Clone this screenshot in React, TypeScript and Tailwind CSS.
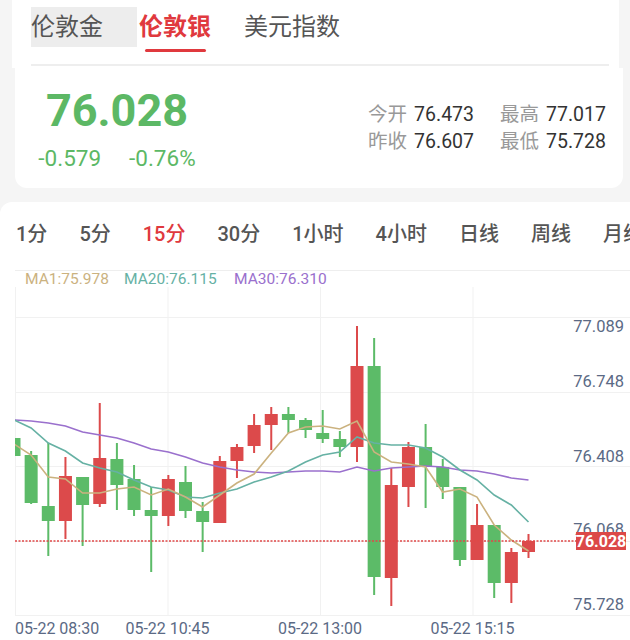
const RED = '#dc4a4b';
const GREEN = '#5cbb68';

// [color, bodyTop, bodyBottom, wickTop, wickBottom]
const candles: [string, number, number, number, number][] = [
  ['g', 438, 456, 436, 458],
  ['g', 455, 503, 451, 504],
  ['g', 506, 521, 443, 556],
  ['r', 476, 521, 457, 539],
  ['g', 477, 505, 477, 546],
  ['r', 458, 504, 403, 507],
  ['g', 459, 485, 443, 510],
  ['g', 479, 510, 465, 516],
  ['g', 510, 516, 487, 572],
  ['r', 479, 516, 475, 526],
  ['g', 482, 511, 466, 518],
  ['g', 511, 522, 502, 552],
  ['r', 461, 523, 456, 523],
  ['r', 447, 461, 444, 478],
  ['r', 425, 446, 414, 453],
  ['r', 414, 425, 407, 450],
  ['g', 414, 420, 407, 433],
  ['g', 420, 430, 418, 438],
  ['g', 433, 439, 410, 443],
  ['g', 439, 447, 431, 457],
  ['r', 366, 447, 326, 462],
  ['g', 366, 577, 338, 595],
  ['r', 485, 578, 468, 606],
  ['r', 447, 487, 442, 507],
  ['g', 447, 467, 424, 508],
  ['g', 467, 487, 459, 499],
  ['g', 487, 560, 487, 566],
  ['r', 525, 560, 504, 560],
  ['g', 525, 583, 525, 598],
  ['r', 552, 583, 548, 603],
  ['r', 541, 552, 534, 558],
];

const ma1 = [444, 455, 477, 479, 493, 493, 489, 487, 495, 489, 497, 507, 495, 483, 474, 453, 433, 427, 426, 429, 421, 452, 462, 464, 467, 492, 489, 497, 525, 540, 551];
const ma20 = [420, 428, 443, 451, 463, 468, 472, 480, 487, 490, 497, 498, 493, 489, 482, 477, 471, 462, 455, 452, 437, 443, 445, 445, 448, 457, 470, 480, 495, 505, 522];
const ma30 = [420, 421, 423, 426, 432, 435, 438, 443, 449, 452, 457, 463, 467, 470, 472, 473, 472, 471, 471, 472, 467, 471, 468, 467, 466, 467, 470, 471, 474, 478, 480];

const cx = (i: number) => 14 + 17.15 * i;
const toPoints = (ys: number[]) => ys.map((y, i) => `${cx(i).toFixed(1)},${y}`).join(' ');

const priceLabels = [
  { text: '77.089', y: 332 },
  { text: '76.748', y: 387 },
  { text: '76.408', y: 462 },
  { text: '76.068', y: 535 },
  { text: '75.728', y: 610 },
];

const timeLabels = [
  { text: '05-22 08:30', x: 15, anchor: 'start' as const },
  { text: '05-22 10:45', x: 167.5, anchor: 'middle' as const },
  { text: '05-22 13:00', x: 320, anchor: 'middle' as const },
  { text: '05-22 15:15', x: 472.5, anchor: 'middle' as const },
];

const periods = ['1分', '5分', '15分', '30分', '1小时', '4小时', '日线', '周线', '月线'];

function KChart() {
  return (
    <svg width={630} height={374} viewBox="0 266 630 374" className="block">
      <defs>
        <clipPath id="plot">
          <rect x={15} y={287} width={615} height={328} />
        </clipPath>
      </defs>

      {/* grid */}
      <line x1={15} y1={270.5} x2={630} y2={270.5} stroke="#eeeeee" />
      {[317, 392, 466, 541, 615].map((y) => (
        <line key={y} x1={15} y1={y + 0.5} x2={630} y2={y + 0.5} stroke="#f1f1f1" />
      ))}
      {[15, 167.5, 320, 472.5].map((x) => (
        <line key={x} x1={x + 0.5} y1={287} x2={x + 0.5} y2={615} stroke="#f1f1f1" />
      ))}

      {/* legend */}
      <text x={25} y={284} fontSize={15.5} fill="#cbb27f">MA1:75.978</text>
      <text x={124} y={284} fontSize={15.5} fill="#66b1a4">MA20:76.115</text>
      <text x={234} y={284} fontSize={15.5} fill="#9a70cd">MA30:76.310</text>

      <g clipPath="url(#plot)">
        {candles.map(([c, bt, bb, wt, wb], i) => {
          const color = c === 'r' ? RED : GREEN;
          const x = cx(i);
          return (
            <g key={i}>
              <rect x={x - 1} y={wt} width={2} height={wb - wt} fill={color} />
              <rect x={x - 6.5} y={bt} width={13} height={Math.max(bb - bt, 2)} fill={color} />
            </g>
          );
        })}
        <polyline points={toPoints(ma30)} fill="none" stroke="#9a70cd" strokeWidth={1.6} />
        <polyline points={toPoints(ma20)} fill="none" stroke="#66b1a4" strokeWidth={1.6} />
        <polyline points={toPoints(ma1)} fill="none" stroke="#cbb27f" strokeWidth={1.6} />
      </g>

      {/* last price line */}
      <line x1={15} y1={541} x2={576} y2={541} stroke="#e04848" strokeWidth={1.5} strokeDasharray="2 1.5" />

      {priceLabels.map((p) => (
        <text key={p.text} x={624} y={p.y} fontSize={16.5} fill="#5b6a85" textAnchor="end">
          {p.text}
        </text>
      ))}
      <rect x={576} y={532} width={50} height={18} fill="#dc4848" />
      <text x={601} y={547} fontSize={16} fontWeight={700} fill="#ffffff" textAnchor="middle">
        76.028
      </text>

      {timeLabels.map((t) => (
        <text key={t.text} x={t.x} y={634} fontSize={16} fill="#5b6a85" textAnchor={t.anchor}>
          {t.text}
        </text>
      ))}
    </svg>
  );
}

export default function App() {
  return (
    <div
      className="w-[630px] h-[640px] bg-[#f5f5f5] overflow-hidden"
      style={{ fontFamily: 'Roboto, "Noto Sans CJK SC", sans-serif' }}
    >
      {/* Header tabs */}
      <div className="ml-[12px] w-[607px] h-[68px] bg-white pt-[7px]">
        <div className="flex items-start pl-[19px]">
          <div className="w-[106px] h-[40px] bg-[#ededed] flex items-center text-[24px] text-[#555] leading-none">
            伦敦金
          </div>
          <div className="ml-[2px] flex flex-col items-center">
            <div className="h-[40px] flex items-center text-[24px] font-bold text-[#e0393e] leading-none">
              伦敦银
            </div>
            <div className="mt-[2px] w-[61px] h-[3px] rounded-full bg-[#e0393e]" />
          </div>
          <div className="ml-[33px] h-[40px] flex items-center text-[24px] text-[#555] leading-none">
            美元指数
          </div>
        </div>
        <div className="mt-[12px] ml-[19px] w-[578px] h-[2px] bg-[#eeeeee]" />
      </div>

      {/* Quote card */}
      <div className="ml-[15px] w-[608px] h-[120px] bg-white rounded-b-[12px] flex items-center">
        <div className="w-[204px] flex flex-col items-center">
          <div className="text-[45px] leading-[45px] font-bold text-[#5cb865]">76.028</div>
          <div className="mt-[14px] flex gap-[28px] text-[22.5px] leading-[22px] text-[#5cb865]">
            <span>-0.579</span>
            <span>-0.76%</span>
          </div>
        </div>
        <div className="ml-auto pr-[17px] grid grid-cols-2 gap-x-[26px] text-[19.5px] leading-[27px]">
          <div className="flex gap-[7px]">
            <span className="text-[#999]">今开</span>
            <span className="text-[#333]">76.473</span>
          </div>
          <div className="flex gap-[7px]">
            <span className="text-[#999]">最高</span>
            <span className="text-[#333]">77.017</span>
          </div>
          <div className="flex gap-[7px]">
            <span className="text-[#999]">昨收</span>
            <span className="text-[#333]">76.607</span>
          </div>
          <div className="flex gap-[7px]">
            <span className="text-[#999]">最低</span>
            <span className="text-[#333]">75.728</span>
          </div>
        </div>
      </div>

      {/* Chart panel */}
      <div className="mt-[14px] w-[640px] bg-white rounded-tl-[12px]">
        <div className="h-[64px] flex items-center gap-[32px] pl-[16px] whitespace-nowrap overflow-hidden text-[20px] text-[#555]">
          {periods.map((p) => (
            <span key={p} className={p === '15分' ? 'text-[#e0393e] font-medium' : 'font-medium'}>
              {p}
            </span>
          ))}
        </div>
        <KChart />
      </div>
    </div>
  );
}
